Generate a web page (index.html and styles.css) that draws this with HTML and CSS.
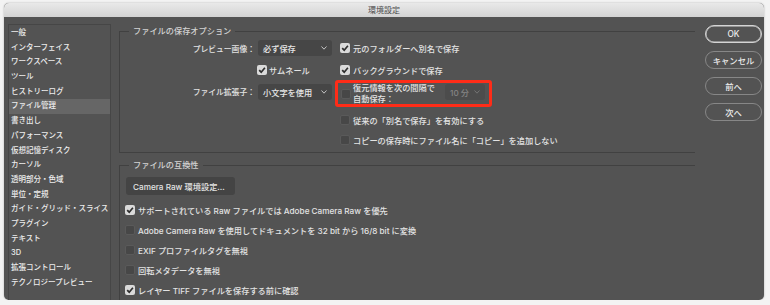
FILE: index.html
```html
<!DOCTYPE html>
<html lang="ja">
<head>
<meta charset="utf-8">
<title>環境設定</title>
<link rel="stylesheet" href="styles.css">
</head>
<body>
<div class="window">
  <div class="titlebar">環境設定</div>
  <div class="content">
    <ul class="sidebar">
      <li>一般</li>
      <li>インターフェイス</li>
      <li>ワークスペース</li>
      <li>ツール</li>
      <li>ヒストリーログ</li>
      <li class="active">ファイル管理</li>
      <li>書き出し</li>
      <li>パフォーマンス</li>
      <li>仮想記憶ディスク</li>
      <li>カーソル</li>
      <li>透明部分・色域</li>
      <li>単位・定規</li>
      <li>ガイド・グリッド・スライス</li>
      <li>プラグイン</li>
      <li>テキスト</li>
      <li>3D</li>
      <li>拡張コントロール</li>
      <li>テクノロジープレビュー</li>
    </ul>

    <div class="main">
      <fieldset class="group group-save">
        <legend>ファイルの保存オプション</legend>
        <div class="save-cols">
          <div class="save-left">
            <span class="flabel">プレビュー画像：</span>
            <div class="select"><span>必ず保存</span><svg class="chev" width="6" height="4" viewBox="0 0 6 4"><path d="M0.5 0.5 L3 3.2 L5.5 0.5"/></svg></div>
            <span></span>
            <div class="crow thumb"><span class="cb on"><svg width="10" height="10" viewBox="0 0 10 10"><path d="M2.2 5.2 L4.2 7.2 L7.9 2.8"/></svg></span><span>サムネール</span></div>
            <span class="flabel">ファイル拡張子：</span>
            <div class="select"><span>小文字を使用</span><svg class="chev" width="6" height="4" viewBox="0 0 6 4"><path d="M0.5 0.5 L3 3.2 L5.5 0.5"/></svg></div>
          </div>
          <div class="save-right">
            <div class="crow r1"><span class="cb on"><svg width="10" height="10" viewBox="0 0 10 10"><path d="M2.2 5.2 L4.2 7.2 L7.9 2.8"/></svg></span><span>元のフォルダーへ別名で保存</span></div>
            <div class="crow r2"><span class="cb on"><svg width="10" height="10" viewBox="0 0 10 10"><path d="M2.2 5.2 L4.2 7.2 L7.9 2.8"/></svg></span><span>バックグラウンドで保存</span></div>
            <div class="redbox">
              <span class="cb"></span>
              <span class="twoline">復元情報を次の間隔で<br>自動保存：</span>
              <div class="select select-sm disabled"><span>10 分</span><svg class="chev" width="6" height="4" viewBox="0 0 6 4"><path d="M0.5 0.5 L3 3.2 L5.5 0.5"/></svg></div>
            </div>
            <div class="crow r4"><span class="cb"></span><span>従来の「別名で保存」を有効にする</span></div>
            <div class="crow"><span class="cb"></span><span>コピーの保存時にファイル名に「コピー」を追加しない</span></div>
          </div>
        </div>
      </fieldset>

      <fieldset class="group group-compat">
        <legend>ファイルの互換性</legend>
        <div class="compat-body">
          <button class="btn-raw" type="button">Camera Raw 環境設定...</button>
          <div class="crow"><span class="cb on"><svg width="10" height="10" viewBox="0 0 10 10"><path d="M2.2 5.2 L4.2 7.2 L7.9 2.8"/></svg></span><span>サポートされている Raw ファイルでは Adobe Camera Raw を優先</span></div>
          <div class="crow"><span class="cb"></span><span>Adobe Camera Raw を使用してドキュメントを 32 bit から 16/8 bit に変換</span></div>
          <div class="crow"><span class="cb"></span><span>EXIF プロファイルタグを無視</span></div>
          <div class="crow"><span class="cb"></span><span>回転メタデータを無視</span></div>
          <div class="crow"><span class="cb on"><svg width="10" height="10" viewBox="0 0 10 10"><path d="M2.2 5.2 L4.2 7.2 L7.9 2.8"/></svg></span><span>レイヤー TIFF ファイルを保存する前に確認</span></div>
        </div>
      </fieldset>
    </div>

    <div class="actions">
      <button class="pill default" type="button">OK</button>
      <button class="pill" type="button">キャンセル</button>
      <button class="pill" type="button">前へ</button>
      <button class="pill" type="button">次へ</button>
    </div>
  </div>
</div>
</body>
</html>
```

FILE: styles.css
```css
body {
  margin: 0;
  background: #f3f3f3;
  font-family: "Inter", "Noto Sans CJK JP", sans-serif;
}

.window {
  margin: 3px 0 0 4px;
  width: 760px;
  height: 297px;
  border-radius: 5px;
  overflow: hidden;
  background: #535353;
  box-shadow: 0 0 2px rgba(0, 0, 0, 0.3);
  display: flex;
  flex-direction: column;
}

.titlebar {
  flex: none;
  height: 14px;
  line-height: 14px;
  background: linear-gradient(#e9e9e9, #d3d3d3);
  color: #4d4d4d;
  font-size: 8px;
  text-align: center;
}

.content {
  flex: 1;
  display: flex;
  min-height: 0;
}

.sidebar {
  list-style: none;
  margin: 7px 0 0 4px;
  padding: 1px 0 0 0;
  width: 103px;
  box-sizing: border-box;
  border: 1px solid #464646;
  border-bottom: none;
  font-size: 7.5px;
  font-weight: 500;
  color: #ededed;
}

.sidebar li {
  height: 14.7px;
  line-height: 14.7px;
  padding-left: 2px;
  white-space: nowrap;
}

.sidebar li.active {
  background: #666666;
}

.main {
  width: 576px;
  margin: 8px 0 0 8px;
  display: flex;
  flex-direction: column;
  color: #e3e3e3;
  font-size: 8.2px;
  font-weight: 500;
}

.group {
  margin: 0;
  padding: 0;
  min-width: 0;
  border: 1px solid #414141;
  border-right: none;
}

.group legend {
  margin-left: 9px;
  padding: 0 4px;
  line-height: 12px;
  color: #d2d2d2;
}

.group-save {
  padding-bottom: 2px;
}

.save-cols {
  display: flex;
}

.save-left {
  width: 216px;
  display: grid;
  grid-template-columns: 138px 74px;
  grid-template-rows: 22px 22px 21px;
  align-items: center;
  align-content: start;
}

.flabel {
  text-align: right;
  padding-right: 3px;
  white-space: nowrap;
  font-size: 7.8px;
}

.select {
  height: 16px;
  box-sizing: border-box;
  display: flex;
  align-items: center;
  justify-content: space-between;
  padding: 0 5px 0 5px;
  background: #464646;
  border-radius: 3px;
  color: #e6e6e6;
  white-space: nowrap;
}

.chev {
  display: block;
  fill: none;
  stroke: #c4c4c4;
  stroke-width: 1;
}

.select.disabled {
  background: #4c4c4c;
  color: #858585;
}

.select.disabled .chev {
  stroke: #747474;
}

.select-sm {
  width: 40px;
  margin-left: auto;
  align-self: flex-start;
  margin-top: 1px;
}

.save-right {
  display: flex;
  flex-direction: column;
}

.crow {
  display: flex;
  align-items: center;
  gap: 3px;
  height: 20px;
  white-space: nowrap;
}

.crow.thumb {
  margin-left: -1px;
  gap: 2px;
}

.save-right > .crow {
  padding-left: 4px;
}

.save-right .r1 {
  height: 22px;
}

.save-right .r2 {
  height: 21px;
}

.save-right .r4 {
  margin-top: 3px;
}

.redbox {
  height: 27px;
  width: 157px;
  box-sizing: border-box;
  margin-left: -1px;
  border: 3px solid #ff2c18;
  border-radius: 3px;
  display: flex;
  align-items: center;
  padding: 0 4px 0 3px;
}

.twoline {
  margin-left: 2px;
  line-height: 11px;
  white-space: nowrap;
}

.cb {
  flex: none;
  width: 10px;
  height: 10px;
  box-sizing: border-box;
  border-radius: 2px;
  background: #474747;
  border: 1px solid #5a5a5a;
}

.cb.on {
  background: #dadada;
  border: none;
}

.cb svg {
  display: block;
  fill: none;
  stroke: #2e2e2e;
  stroke-width: 1.7;
}

.group-compat {
  margin-top: 6px;
  flex: 1;
  border-bottom: none;
}

.compat-body {
  padding-left: 5px;
}

.btn-raw {
  display: block;
  margin: 6px 0 5px 1px;
  width: 109px;
  height: 18px;
  padding: 0 0 0 7px;
  border: none;
  border-radius: 3px;
  background: #444444;
  color: #e3e3e3;
  font: inherit;
  text-align: left;
  white-space: nowrap;
}

.actions {
  display: flex;
  flex-direction: column;
  gap: 8px;
  margin: 8px 0 0 10px;
}

.pill {
  width: 57px;
  height: 18px;
  padding: 0;
  border: 1px solid #878787;
  border-radius: 9px;
  background: transparent;
  color: #ececec;
  font-family: "Inter", "Noto Sans CJK JP", sans-serif;
  font-size: 8.3px;
  font-weight: 500;
}

.pill.default {
  border-color: #d4d4d4;
  box-shadow: inset 0 0 0 0.5px #d4d4d4;
}
```
